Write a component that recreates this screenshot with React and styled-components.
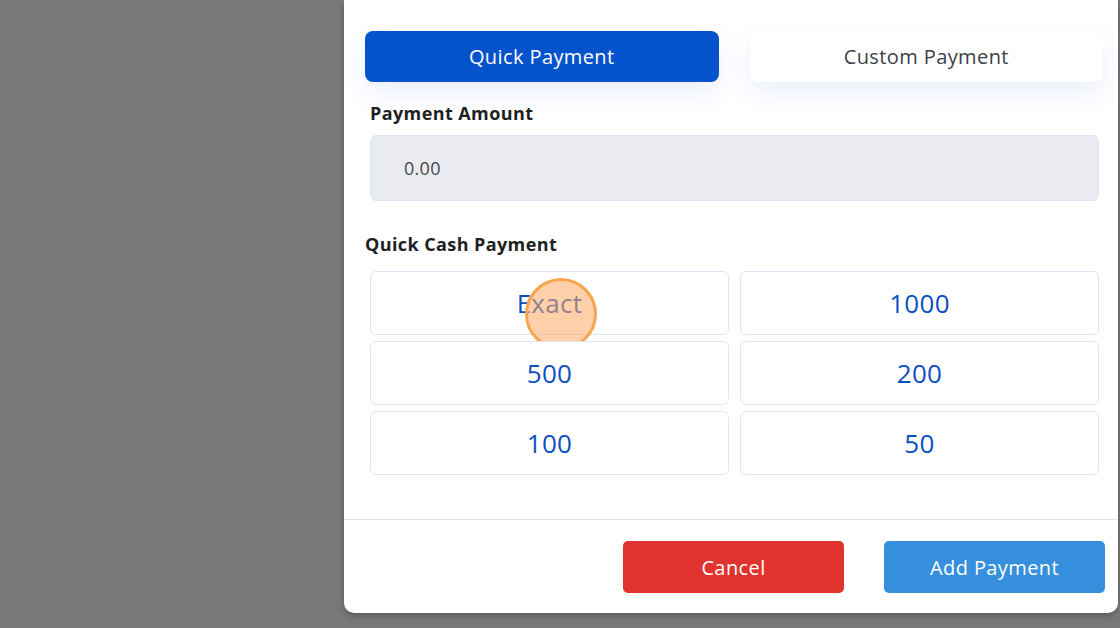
import React from "react";
import styled, { createGlobalStyle } from "styled-components";

const quickAmounts = ["Exact", "1000", "500", "200", "100", "50"];

export default function App() {
  return (
    <>
      <GlobalStyle />
      <Backdrop>
        <Modal>
          <Body>
            <TabBar>
              <Tab active>Quick Payment</Tab>
              <Tab>Custom Payment</Tab>
            </TabBar>
            <Section>
              <FieldLabel>Payment Amount</FieldLabel>
              <AmountInput readOnly value="0.00" />
            </Section>
            <SectionTitle>Quick Cash Payment</SectionTitle>
            <CashGrid>
              {quickAmounts.map((amount, i) => (
                <CashButton key={amount}>
                  {amount}
                  {i === 0 && <ClickMarker />}
                </CashButton>
              ))}
            </CashGrid>
          </Body>
          <Footer>
            <ActionButton variant="cancel">Cancel</ActionButton>
            <ActionButton variant="primary">Add Payment</ActionButton>
          </Footer>
        </Modal>
      </Backdrop>
    </>
  );
}

const GlobalStyle = createGlobalStyle`
  html, body {
    margin: 0;
    padding: 0;
    background: #797979;
    font-family: "Open Sans", "Noto Sans", sans-serif;
  }
  * {
    box-sizing: border-box;
  }
`;

const Backdrop = styled.div`
  width: 1120px;
  height: 628px;
  overflow: hidden;
  background: #797979;
  display: flex;
  align-items: flex-start;
  padding-left: 344px;
`;

const Modal = styled.section`
  width: 774px;
  height: 613px;
  background: #ffffff;
  border-radius: 0 0 10px 10px;
  box-shadow: 0 3px 6px rgba(0, 0, 0, 0.25);
  display: flex;
  flex-direction: column;
`;

const Body = styled.div`
  flex: 1;
  padding: 31px 15px 0 21px;
`;

const TabBar = styled.div`
  display: grid;
  grid-template-columns: 1fr 1fr;
  gap: 31px;
`;

const Tab = styled.button`
  height: 51px;
  border: none;
  border-radius: 8px;
  font-family: inherit;
  font-size: 20px;
  letter-spacing: 0.4px;
  background: ${({ active }) => (active ? "#0453cd" : "#ffffff")};
  color: ${({ active }) => (active ? "#ffffff" : "#3c3f46")};
  box-shadow: 0 10px 24px rgba(60, 100, 220, 0.1);
`;

const Section = styled.div`
  padding: 0 4px 0 5px;
`;

const FieldLabel = styled.div`
  margin-top: 19px;
  line-height: 24px;
  font-size: 18px;
  font-weight: 700;
  letter-spacing: 0.4px;
  color: #1e1f22;
`;

const AmountInput = styled.input`
  display: block;
  width: 100%;
  height: 66px;
  margin-top: 10px;
  padding: 0 33px;
  background: #e9ebf0;
  border: 1px solid #dde7f7;
  border-radius: 6px;
  font-family: inherit;
  font-size: 18px;
  letter-spacing: 0.3px;
  color: #45474c;
  outline: none;
`;

const SectionTitle = styled.div`
  margin-top: 31px;
  line-height: 24px;
  font-size: 18px;
  font-weight: 700;
  letter-spacing: 0.4px;
  color: #1e1f22;
`;

const CashGrid = styled.div`
  display: grid;
  grid-template-columns: 1fr 1fr;
  column-gap: 11px;
  row-gap: 6px;
  margin-top: 15px;
  padding: 0 4px 0 5px;
`;

const CashButton = styled.button`
  position: relative;
  height: 64px;
  background: #ffffff;
  border: 1px solid #dce6f6;
  border-radius: 6px;
  font-family: inherit;
  font-size: 26px;
  letter-spacing: 0.3px;
  color: #0b4fc3;
`;

const ClickMarker = styled.span`
  position: absolute;
  left: 154px;
  top: 6px;
  width: 72px;
  height: 72px;
  border-radius: 50%;
  background: rgba(255, 170, 100, 0.55);
  border: 3px solid #f7a64f;
  pointer-events: none;
`;

const Footer = styled.div`
  border-top: 1px solid #dbe6f0;
  padding: 21px 13px 20px 0;
  display: flex;
  justify-content: flex-end;
  gap: 40px;
`;

const ActionButton = styled.button`
  width: 221px;
  height: 52px;
  border: none;
  border-radius: 5px;
  font-family: inherit;
  font-size: 20px;
  letter-spacing: 0.4px;
  color: #ffffff;
  background: ${({ variant }) => (variant === "cancel" ? "#e0332d" : "#368fdc")};
`;
